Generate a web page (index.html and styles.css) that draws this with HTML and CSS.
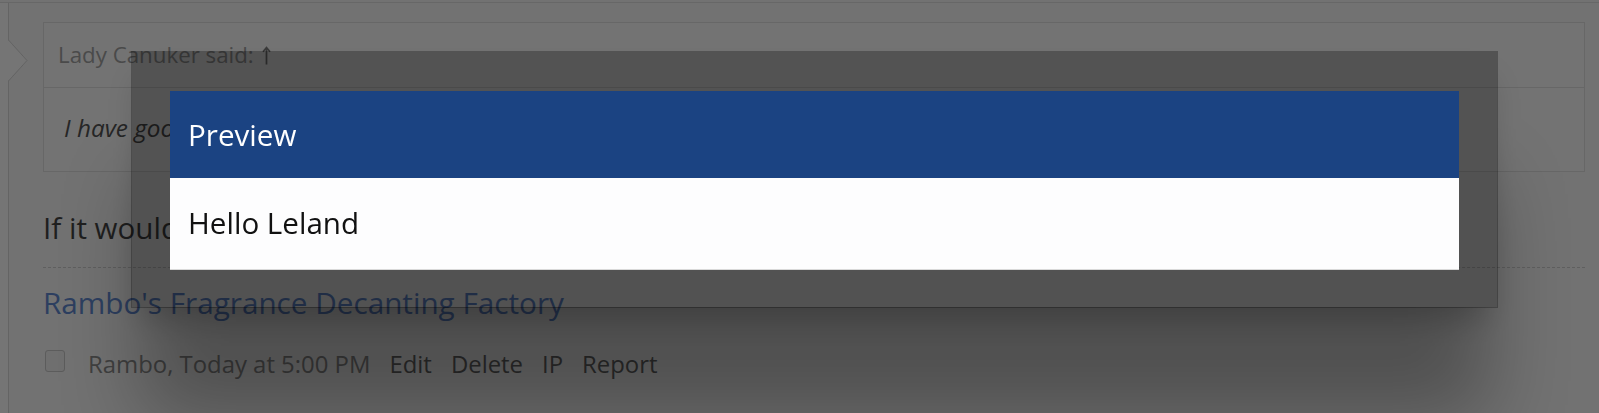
FILE: index.html
```html
<!DOCTYPE html>
<html lang="en">
<head>
<meta charset="utf-8">
<title>Preview</title>
<link rel="stylesheet" href="styles.css">
</head>
<body>
<div class="page">
  <div class="message">
    <div class="gutter"></div>
    <svg class="pointer" width="20" height="42" viewBox="0 0 20 42" aria-hidden="true">
      <polygon points="0,0 19,20.5 0,41" fill="#757575"/>
      <polyline points="0.5,0 19,20.5 0.5,41" fill="none" stroke="#646464" stroke-width="1"/>
    </svg>
    <div class="content">
      <div class="quote">
        <div class="quote-head">Lady Canuker said: <svg class="up" width="9" height="19" viewBox="0 0 9 19" aria-hidden="true"><path d="M4.5 18.5V2M1 5.8L4.5 1.6L8 5.8" fill="none" stroke="#3a3a3a" stroke-width="1.7"/></svg></div>
        <div class="quote-body">I have good news for everyone.</div>
      </div>
      <p class="msg-text">If it would help, I can share more.</p>
      <h3 class="title">Rambo's Fragrance Decanting Factory</h3>
      <div class="meta">
        <span class="check"></span>
        <span class="byline">Rambo, Today at 5:00 PM</span>
        <a class="ctl">Edit</a>
        <a class="ctl">Delete</a>
        <a class="ctl">IP</a>
        <a class="ctl">Report</a>
      </div>
    </div>
  </div>
</div>
<div class="modal">
  <div class="modal-head">Preview</div>
  <div class="modal-body">Hello Leland</div>
</div>
</body>
</html>
```

FILE: styles.css
```css
html, body {
  margin: 0;
  padding: 0;
  height: 100%;
  overflow: hidden;
}
body {
  background: #727272;
  font-family: "Open Sans", "Liberation Sans", sans-serif;
}
.page {
  border-top: 1px solid #676767;
  margin-top: 2px;
}
.message {
  position: relative;
  display: flex;
  min-height: 420px;
}
.gutter {
  width: 8px;
  flex: 0 0 8px;
  background: #757575;
  border-right: 1px solid #646464;
}
.pointer {
  position: absolute;
  left: 8px;
  top: 37px;
}
.content {
  flex: 1;
  padding: 19px 14px 0 34px;
}
.quote {
  border: 1px solid #676767;
  background: #737373;
}
.quote-head {
  height: 64px;
  line-height: 64px;
  font-size: 22.3px;
  color: #4a4a4a;
  padding-left: 14px;
  border-bottom: 1px solid #676767;
}
.up {
  vertical-align: -2px;
  margin-left: 2px;
}
.quote-body {
  height: 80px;
  line-height: 80px;
  padding: 0 0 3px 20px;
  font-size: 24.3px;
  font-style: italic;
  color: #262626;
}
.msg-text {
  margin: 36px 0 0;
  padding-bottom: 19px;
  font-size: 29.6px;
  line-height: 40px;
  color: #1f1f1f;
  border-bottom: 1px dashed #5f5f5f;
}
.title {
  margin: 15px 0 0;
  font-size: 29.7px;
  line-height: 40px;
  font-weight: 400;
  color: #2d3f60;
}
.meta {
  margin-top: 25px;
  display: flex;
  align-items: flex-start;
  gap: 19px;
  font-size: 23.9px;
  line-height: 32px;
}
.check {
  width: 18px;
  height: 20px;
  margin: 2px 4px 0 2px;
  border: 1px solid #5c5c5c;
  border-radius: 3px;
  background: #6f6f6f;
}
.byline {
  color: #404040;
}
.ctl {
  color: #2f2f2f;
}
.modal {
  position: fixed;
  left: 131px;
  top: 51px;
  width: 1289px;
  border-style: solid;
  border-width: 40px 39px 38px 39px;
  border-color: rgba(0, 0, 0, 0.28);
  background: #fdfdfe;
  background-clip: padding-box;
  box-shadow: 0 20px 30px -10px rgba(0, 0, 0, 0.22), 0 120px 80px -10px rgba(0, 0, 0, 0.3);
}
.modal-head {
  height: 87px;
  line-height: 87px;
  padding-left: 18px;
  background: #1b4382;
  color: #ffffff;
  font-size: 29.6px;
}
.modal-body {
  height: 91px;
  line-height: 90px;
  padding-left: 18px;
  font-size: 29.6px;
  color: #111111;
  border-bottom: 1px solid #d9d9d9;
}
```
